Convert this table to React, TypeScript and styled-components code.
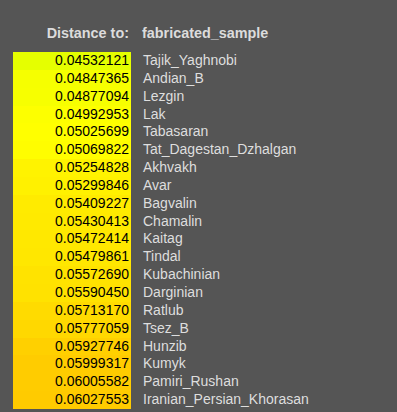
import React from "react";
import styled, { createGlobalStyle } from "styled-components";

const GlobalStyle = createGlobalStyle`
  html, body {
    margin: 0;
    padding: 0;
    background-color: #555555;
  }
`;

const Page = styled.div`
  width: 397px;
  height: 412px;
  background-color: #555555;
  font-family: "Liberation Sans", Arial, sans-serif;
  font-size: 14px;
  padding: 24px 0 0 13px;
  box-sizing: border-box;
  overflow: hidden;
`;

const Table = styled.div`
  display: grid;
  grid-template-columns: 118px auto;
  column-gap: 11px;
`;

const HeadCell = styled.div<{ $align?: "left" | "right" }>`
  height: 18px;
  line-height: 18px;
  font-size: 14.4px;
  font-weight: bold;
  color: #dcdcdc;
  text-align: ${(p) => p.$align ?? "left"};
  padding-right: ${(p) => (p.$align === "right" ? "2px" : "0")};
  margin-bottom: 10px;
  white-space: nowrap;
`;

const ValueCell = styled.div<{ $bg: string }>`
  height: 17.85px;
  line-height: 17.85px;
  background-color: ${(p) => p.$bg};
  color: #000000;
  text-align: right;
  padding-right: 2px;
`;

const NameCell = styled.div`
  height: 17.85px;
  line-height: 17.85px;
  color: #dedede;
  padding-left: 1px;
  white-space: nowrap;
`;

const rows: [number, string][] = [
  [0.04532121, "Tajik_Yaghnobi"],
  [0.04847365, "Andian_B"],
  [0.04877094, "Lezgin"],
  [0.04992953, "Lak"],
  [0.05025699, "Tabasaran"],
  [0.05069822, "Tat_Dagestan_Dzhalgan"],
  [0.05254828, "Akhvakh"],
  [0.05299846, "Avar"],
  [0.05409227, "Bagvalin"],
  [0.05430413, "Chamalin"],
  [0.05472414, "Kaitag"],
  [0.05479861, "Tindal"],
  [0.0557269, "Kubachinian"],
  [0.0559045, "Darginian"],
  [0.0571317, "Ratlub"],
  [0.05777059, "Tsez_B"],
  [0.05927746, "Hunzib"],
  [0.05999317, "Kumyk"],
  [0.06005582, "Pamiri_Rushan"],
  [0.06027553, "Iranian_Persian_Khorasan"],
];

const min = rows[0][0];
const max = rows[rows.length - 1][0];

// green-yellow -> yellow -> amber scale
const shade = (v: number) => {
  const t = (v - min) / (max - min);
  const knee = 0.33;
  if (t <= knee) {
    const r = Math.round(229 + (255 - 229) * (t / knee));
    return `rgb(${r}, 255, 0)`;
  }
  const g = Math.round(255 - (255 - 203) * ((t - knee) / (1 - knee)));
  return `rgb(255, ${g}, 0)`;
};

const App: React.FC = () => {
  return (
    <>
      <GlobalStyle />
      <Page>
        <Table>
          <HeadCell $align="right">Distance to:</HeadCell>
          <HeadCell>fabricated_sample</HeadCell>
          {rows.map(([value, name]) => (
            <React.Fragment key={name}>
              <ValueCell $bg={shade(value)}>{value.toFixed(8)}</ValueCell>
              <NameCell>{name}</NameCell>
            </React.Fragment>
          ))}
        </Table>
      </Page>
    </>
  );
};

export default App;
